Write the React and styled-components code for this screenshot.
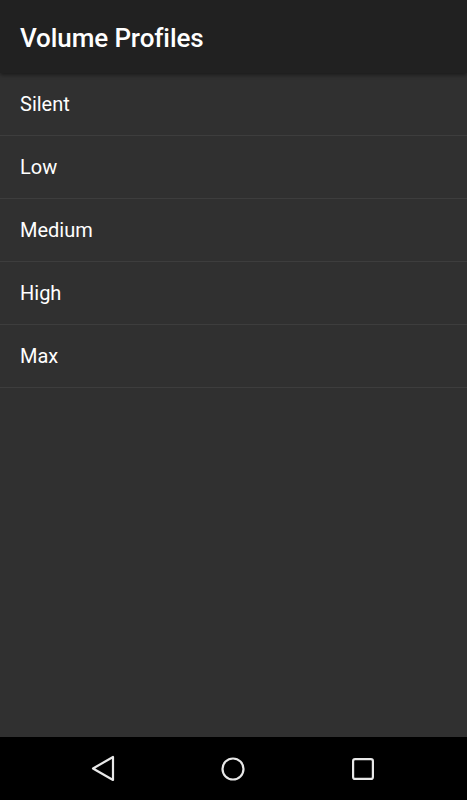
import React from "react";
import styled, { createGlobalStyle } from "styled-components";

const profiles = ["Silent", "Low", "Medium", "High", "Max"];

const GlobalStyle = createGlobalStyle`
  html, body {
    margin: 0;
    padding: 0;
    background: #303030;
  }
  body {
    font-family: Roboto, "Noto Sans", sans-serif;
  }
`;

const Screen = styled.div`
  width: 467px;
  height: 800px;
  display: flex;
  flex-direction: column;
  background: #303030;
  overflow: hidden;
`;

const Toolbar = styled.header`
  height: 73px;
  flex-shrink: 0;
  display: flex;
  align-items: center;
  padding: 2px 20px 0;
  box-sizing: border-box;
  background: #212121;
  box-shadow: 0 2px 4px rgba(0, 0, 0, 0.45);
  position: relative;
  z-index: 1;
`;

const Title = styled.h1`
  margin: 0;
  color: #ffffff;
  font-size: 26px;
  font-weight: 500;
  letter-spacing: -0.1px;
`;

const List = styled.ul`
  flex: 1;
  margin: 0;
  padding: 0;
  list-style: none;
`;

const Row = styled.li`
  height: 62px;
  display: flex;
  align-items: center;
  padding: 0 20px;
  border-bottom: 1px solid #3d3d3d;
  color: #ffffff;
  font-size: 20px;
`;

const NavBar = styled.nav`
  height: 63px;
  flex-shrink: 0;
  background: #000000;
  display: flex;
  align-items: center;
  justify-content: center;
  padding-right: 2px;
`;

const NavButton = styled.button`
  width: 130px;
  height: 48px;
  border: 0;
  background: transparent;
  display: flex;
  align-items: center;
  justify-content: center;
  padding: 0;
`;

function BackIcon() {
  return (
    <svg width="24" height="27" viewBox="0 0 24 27">
      <path d="M2 13.5 L22 2 L22 25 Z" fill="none" stroke="#e8e8e8" strokeWidth="2.2" strokeLinejoin="round" />
    </svg>
  );
}

function HomeIcon() {
  return (
    <svg width="24" height="24" viewBox="0 0 24 24">
      <circle cx="12" cy="12" r="10.5" fill="none" stroke="#e8e8e8" strokeWidth="2.2" />
    </svg>
  );
}

function RecentsIcon() {
  return (
    <svg width="22" height="22" viewBox="0 0 22 22">
      <rect x="1.1" y="1.1" width="19.8" height="19.8" rx="2" fill="none" stroke="#e8e8e8" strokeWidth="2.2" />
    </svg>
  );
}

export default function App() {
  return (
    <>
      <GlobalStyle />
      <Screen>
        <Toolbar>
          <Title>Volume Profiles</Title>
        </Toolbar>
        <List>
          {profiles.map((name) => (
            <Row key={name}>{name}</Row>
          ))}
        </List>
        <NavBar>
          <NavButton aria-label="Back"><BackIcon /></NavButton>
          <NavButton aria-label="Home"><HomeIcon /></NavButton>
          <NavButton aria-label="Recents"><RecentsIcon /></NavButton>
        </NavBar>
      </Screen>
    </>
  );
}
